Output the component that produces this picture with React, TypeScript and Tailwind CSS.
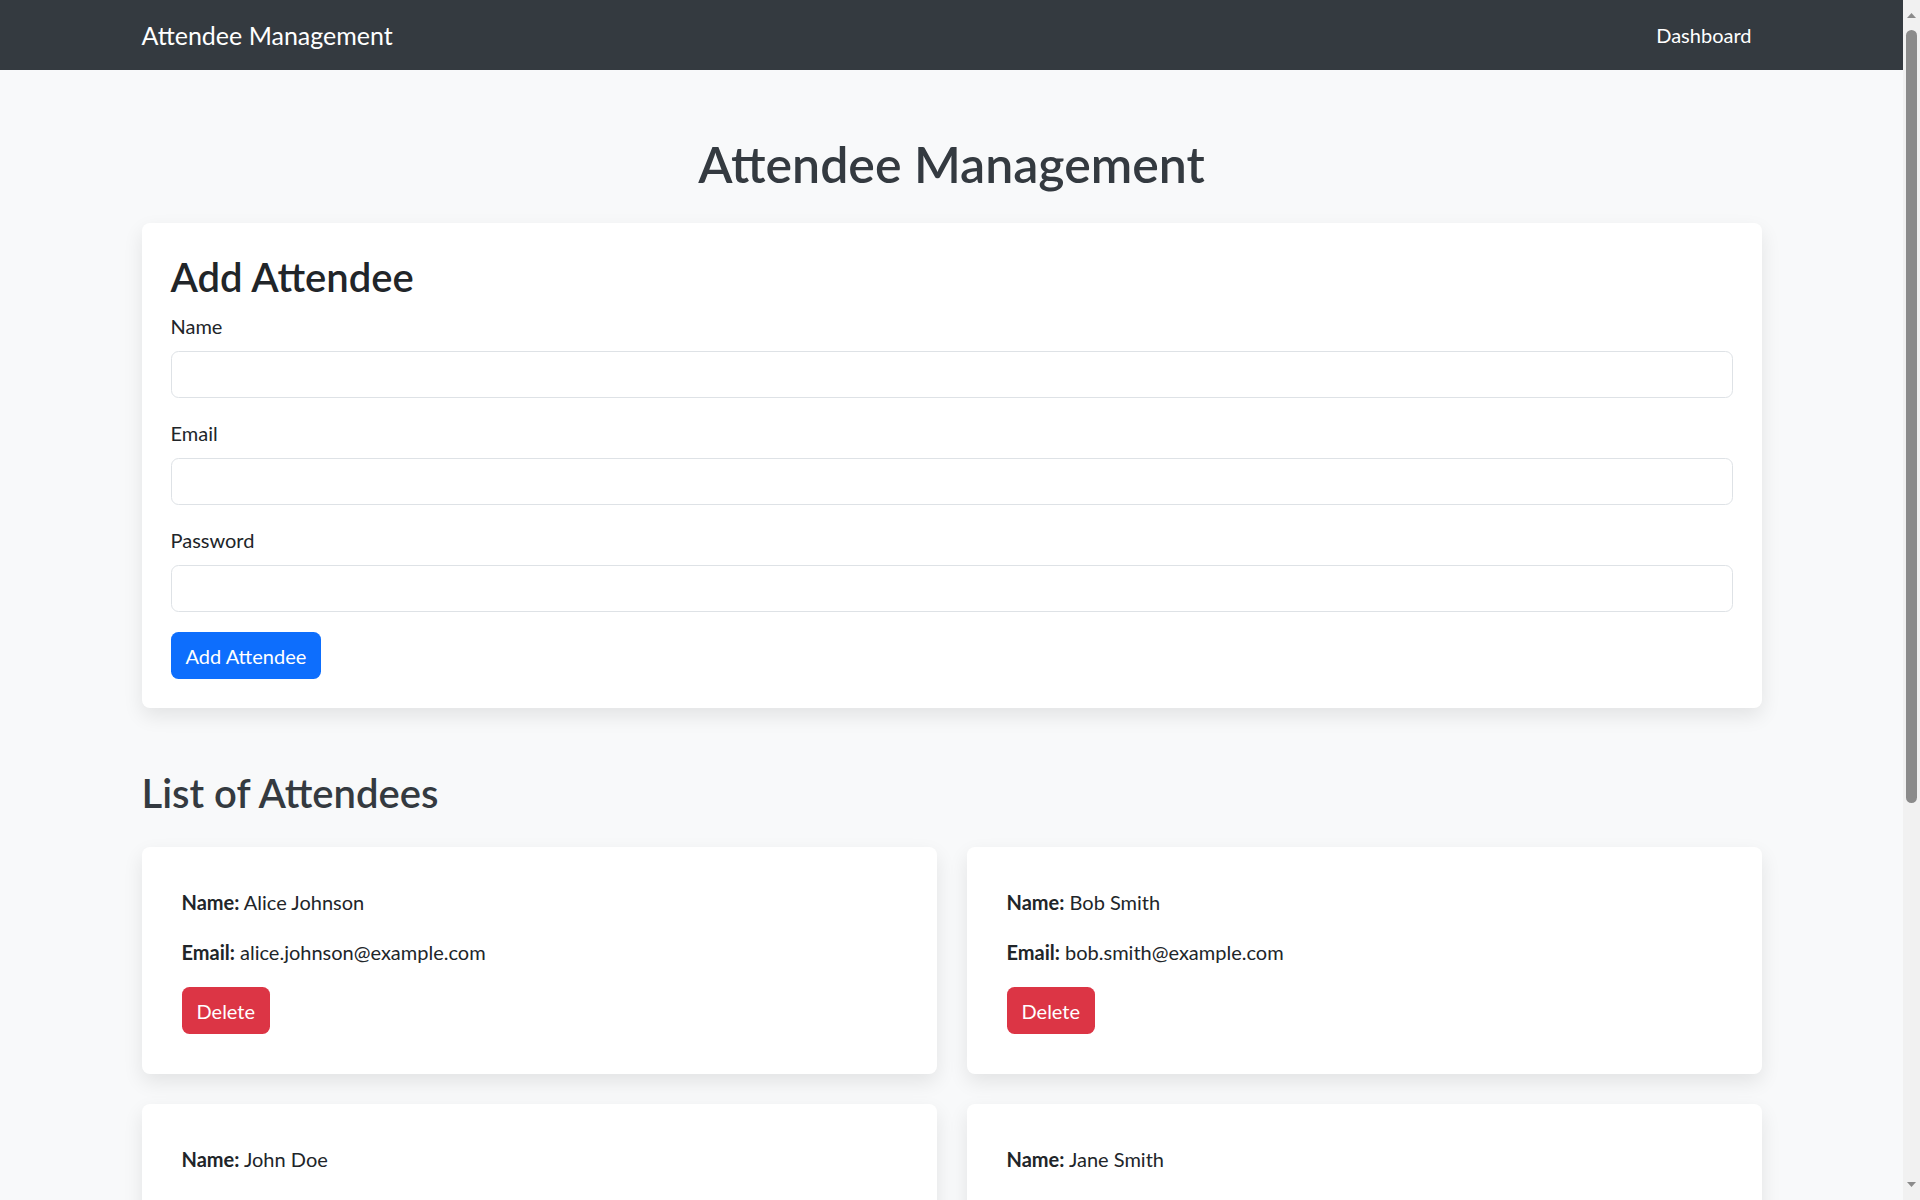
import React from "react";

type Attendee = {
  name: string;
  email: string;
};

const attendees: Attendee[] = [
  { name: "Alice Johnson", email: "alice.johnson@example.com" },
  { name: "Bob Smith", email: "bob.smith@example.com" },
  { name: "John Doe", email: "john.doe@example.com" },
  { name: "Jane Smith", email: "jane.smith@example.com" },
  { name: "Michael Brown", email: "michael.brown@example.com" },
  { name: "Emily Davis", email: "emily.davis@example.com" },
];

const Field: React.FC<{ label: string; type?: string }> = ({ label, type = "text" }) => (
  <div className="mb-[20px]">
    <label className="block mb-[10px] text-[20px] leading-[30px] text-[#212529]">{label}</label>
    <input
      type={type}
      className="block w-full h-[47px] px-[15px] text-[20px] bg-white border border-[#dee2e6] rounded-[7.5px] outline-none"
    />
  </div>
);

const AttendeeCard: React.FC<{ attendee: Attendee }> = ({ attendee }) => (
  <div className="bg-white rounded-[8px] shadow-[0_8px_20px_rgba(0,0,0,0.09)] p-[40px] text-[20px] leading-[30px] text-[#212529]">
    <p className="mb-[20px]">
      <strong className="font-bold">Name:</strong> {attendee.name}
    </p>
    <p className="mb-[20px]">
      <strong className="font-bold">Email:</strong> {attendee.email}
    </p>
    <button className="h-[47px] px-[15px] rounded-[7.5px] bg-[#dc3545] text-white text-[20px]">
      Delete
    </button>
  </div>
);

// window scrollbar as it shows in the screenshot
const ScrollBar: React.FC = () => (
  <div className="w-[17px] h-screen shrink-0 bg-[#f1f1f1] flex flex-col items-center">
    <svg width="17" height="17" viewBox="0 0 17 17" className="shrink-0 mt-[6px]">
      <polygon points="4,12 8.5,7 13,12" fill="#8b8b8b" />
    </svg>
    <div className="w-[11px] h-[773px] mt-[7px] rounded-full bg-[#8b8b8b]" />
    <div className="flex-1" />
    <svg width="17" height="17" viewBox="0 0 17 17" className="shrink-0 mb-[6px]">
      <polygon points="4,5 8.5,10 13,5" fill="#8b8b8b" />
    </svg>
  </div>
);

export default function App() {
  return (
    <div className="flex h-screen overflow-hidden bg-[#f8f9fa] font-['Lato',sans-serif]">
      <div className="flex-1 min-w-0">
        {/* Navbar */}
        <nav className="h-[70px] bg-[#343a40]">
          <div className="max-w-[1650px] h-full mx-auto px-[15px] flex items-center justify-between">
            <a className="text-[25px] leading-[37px] text-white">Attendee Management</a>
            <a className="px-[10px] text-[20px] leading-[30px] text-white">Dashboard</a>
          </div>
        </nav>

        <main className="max-w-[1650px] mx-auto px-[15px] pt-[64px] pb-[120px]">
          <h1 className="text-center text-[50px] leading-[60px] font-semibold text-[#343a40] mb-[29px]">
            Attendee Management
          </h1>

          {/* Add form */}
          <div className="bg-white rounded-[8px] shadow-[0_8px_20px_rgba(0,0,0,0.09)] px-[29px] pt-[30px] pb-[29px]">
            <h2 className="text-[40px] leading-[48px] font-semibold text-[#212529] mb-[10px]">Add Attendee</h2>
            <Field label="Name" />
            <Field label="Email" type="email" />
            <Field label="Password" type="password" />
            <button className="h-[47px] px-[15px] rounded-[7.5px] bg-[#0d6efd] text-white text-[20px]">
              Add Attendee
            </button>
          </div>

          <h2 className="mt-[61px] mb-[30px] text-[40px] leading-[48px] font-semibold text-[#343a40]">
            List of Attendees
          </h2>

          <div className="grid grid-cols-2 gap-[30px]">
            {attendees.map((a) => (
              <AttendeeCard key={a.email} attendee={a} />
            ))}
          </div>
        </main>
      </div>
      <ScrollBar />
    </div>
  );
}
